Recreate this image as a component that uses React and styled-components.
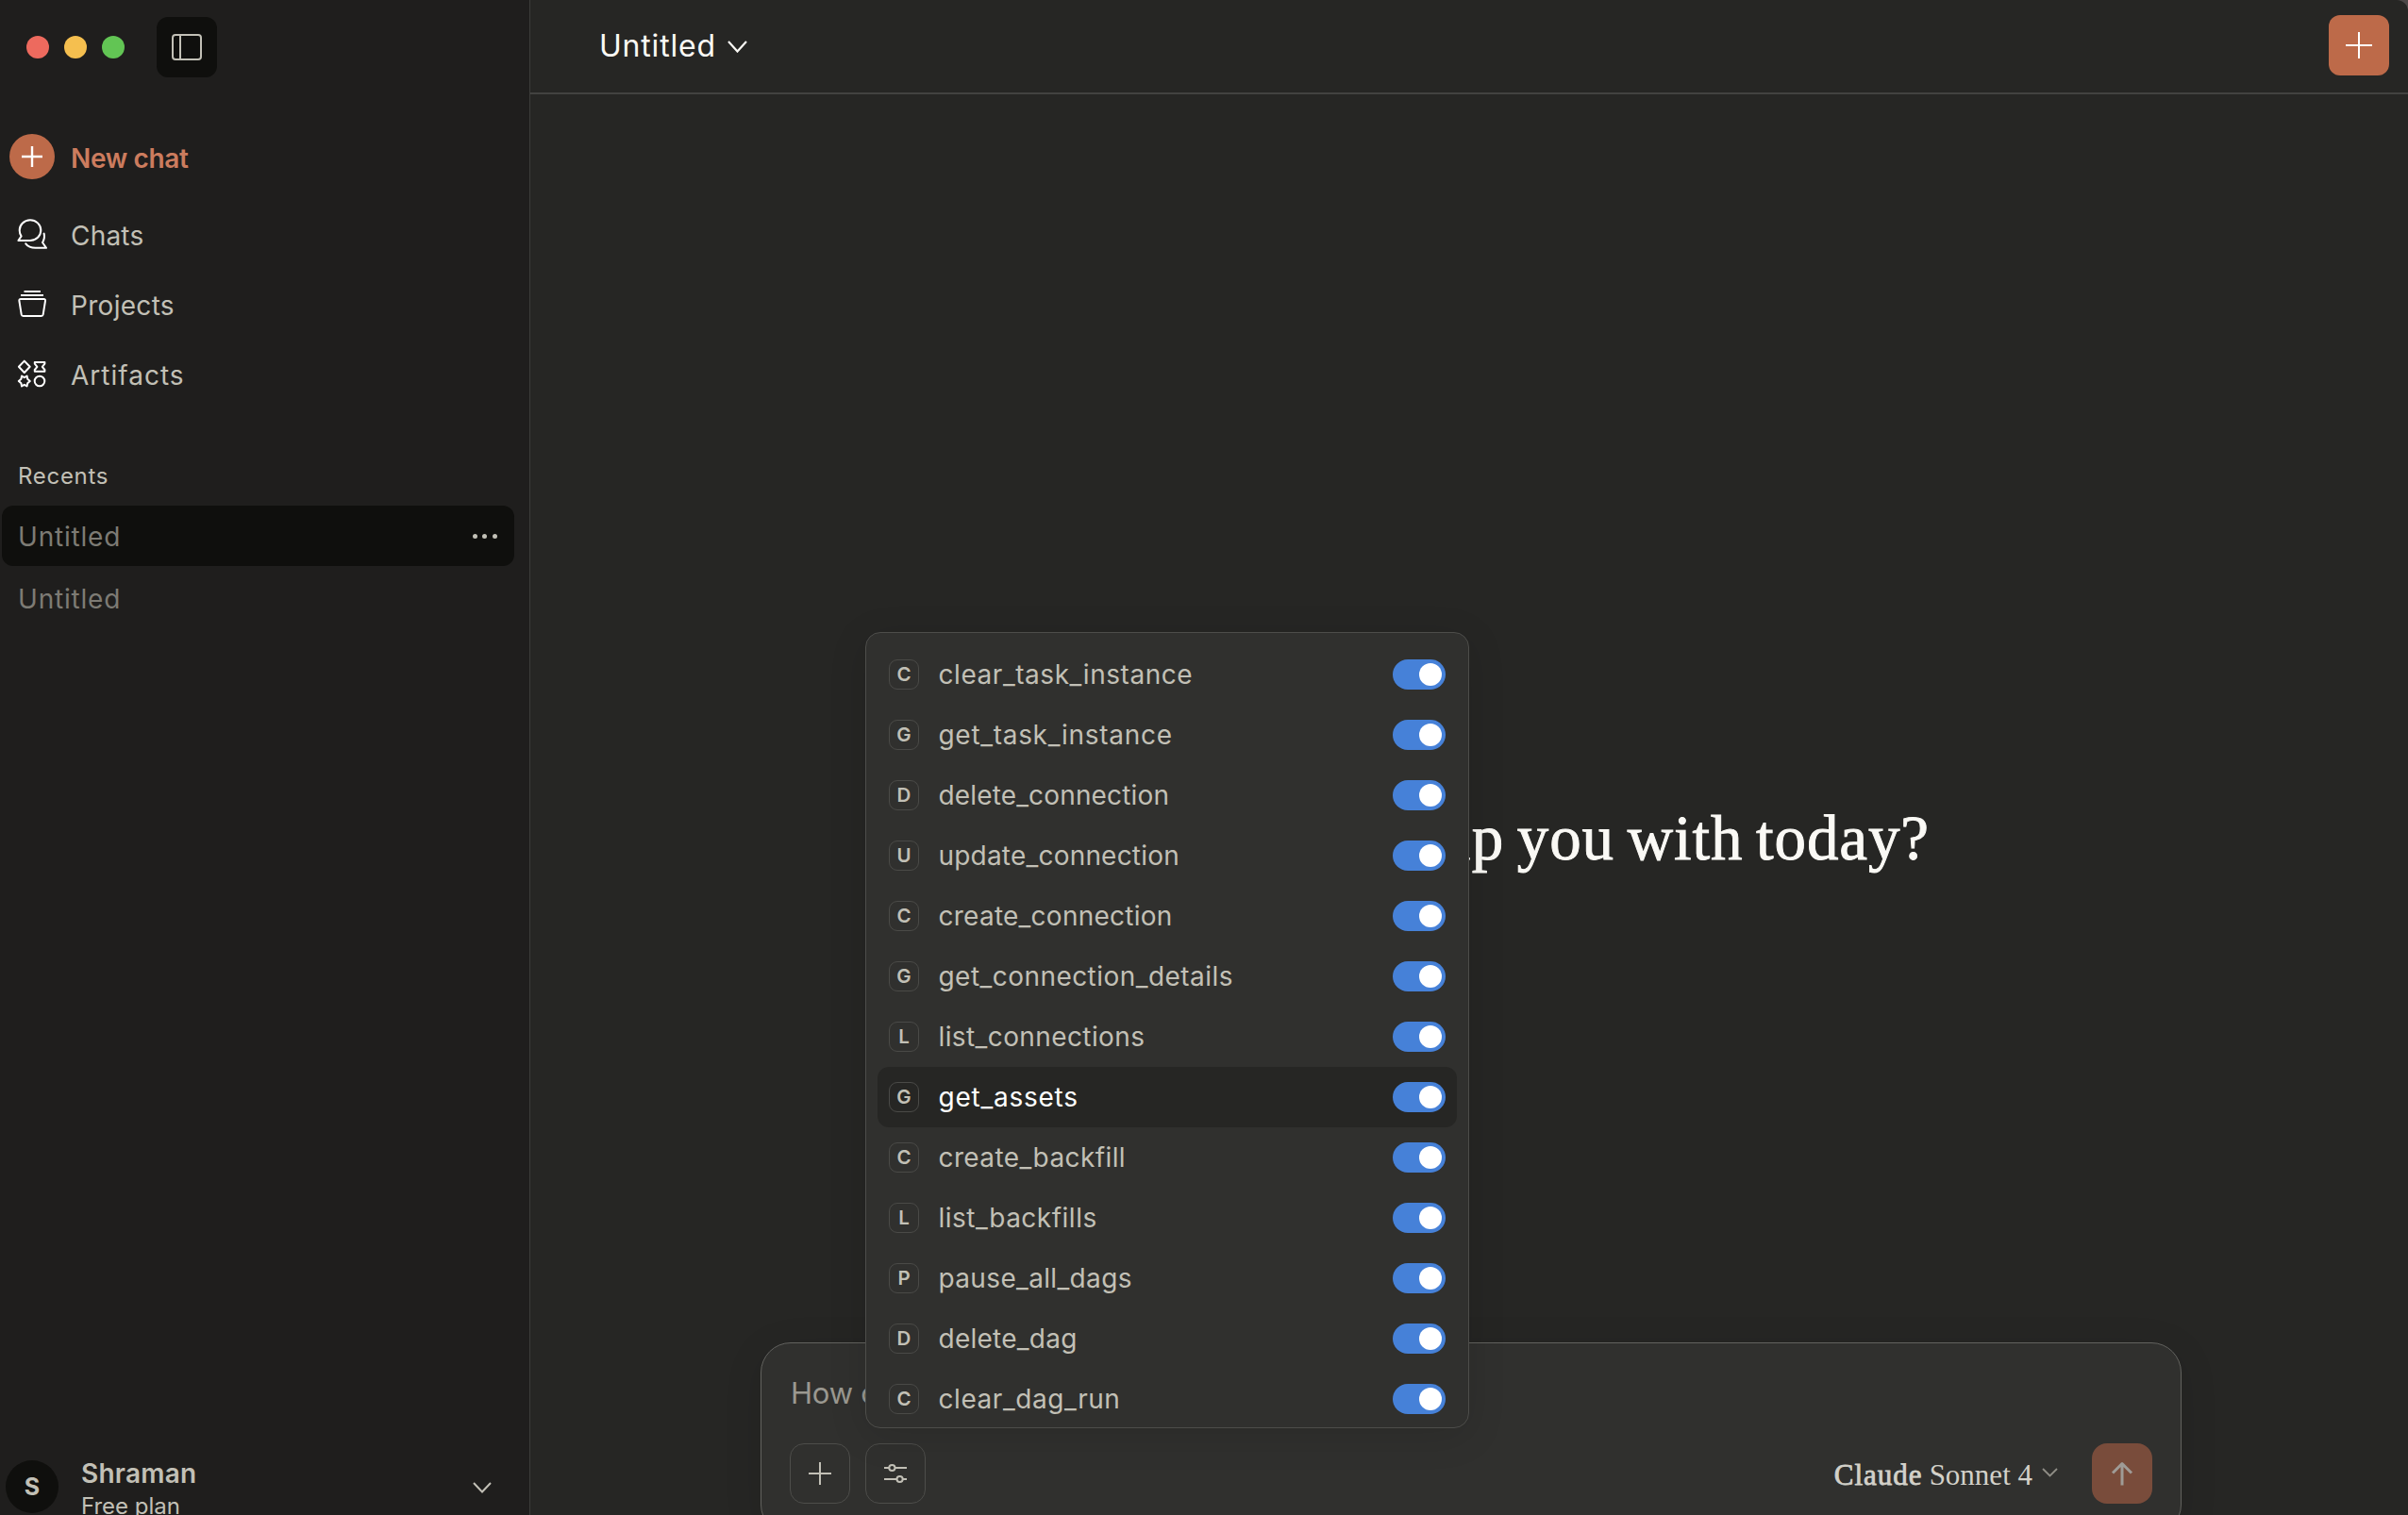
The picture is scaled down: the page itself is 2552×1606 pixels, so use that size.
import React from "react";
import styled, { createGlobalStyle, css } from "styled-components";

const color = {
  sidebar: "#1f1e1d",
  main: "#262624",
  raised: "#30302e",
  sunken: "#0f0f0d",
  text: "#c2c0b6",
  bright: "#faf9f5",
  muted: "#7d7b74",
  accent: "#bd6a49",
  accentText: "#cc7c5e",
  blue: "#4681d8",
  line: "#424240",
};

const Global = createGlobalStyle`
  *, *::before, *::after { box-sizing: border-box; }
  html, body { margin: 0; padding: 0; background: #4c4747; overflow: hidden; }
  button { font: inherit; color: inherit; background: none; border: 0; padding: 0; margin: 0; }
  svg { display: block; flex: none; }
`;

const Window = styled.div`
  display: flex;
  width: 2552px;
  height: 1606px;
  overflow: hidden;
  border-top-right-radius: 12px;
  background: ${color.main};
  color: ${color.text};
  font-family: Inter, "Liberation Sans", sans-serif;
  font-size: 28px;
  line-height: 1;
  white-space: nowrap;
`;

/* ---------- sidebar ---------- */

const Sidebar = styled.aside`
  display: flex;
  flex-direction: column;
  flex: none;
  width: 562px;
  height: 1606px;
  background: ${color.sidebar};
  border-right: 1px solid #3c3c3a;
`;

const TitleBar = styled.div`
  display: flex;
  align-items: center;
  flex: none;
  height: 100px;
  padding-left: 28px;
`;

const Lights = styled.div`
  display: flex;
  gap: 16px;
  margin-right: 34px;
`;

const Light = styled.span`
  width: 24px;
  height: 24px;
  border-radius: 50%;
  background: ${(p) => p.$tone};
`;

const PanelToggle = styled.button`
  display: grid;
  place-items: center;
  width: 64px;
  height: 64px;
  border-radius: 12px;
  background: ${color.sunken};
`;

const Nav = styled.nav`
  display: flex;
  flex-direction: column;
  padding-top: 29px;
`;

const NavItem = styled.a`
  display: flex;
  align-items: center;
  height: 74px;
  padding-left: 10px;
  letter-spacing: ${(p) => p.$track || 0}px;
  ${(p) =>
    p.$primary &&
    css`
      margin-bottom: 8px;
      color: ${color.accentText};
      font-weight: 600;
      letter-spacing: -0.35px;
    `}
`;

const IconSlot = styled.span`
  display: grid;
  place-items: center;
  width: 48px;
  height: 48px;
  margin-right: 17px;
  border-radius: 50%;
  color: #fff;
  background: ${(p) => (p.$filled ? color.accent : "transparent")};
`;

const NavLabel = styled.span`
  padding-top: 3px;
  line-height: 40px;
`;

const SectionTitle = styled.h2`
  margin: 54px 0 13px;
  padding-left: 19px;
  font-size: 24px;
  font-weight: 400;
  line-height: 36px;
  letter-spacing: 0.7px;
`;

const Recent = styled.a`
  display: flex;
  align-items: center;
  justify-content: space-between;
  height: 64px;
  margin: 0 16px 2px 2px;
  padding: 2px 18.5px 0 17px;
  border-radius: 12px;
  color: ${color.muted};
  letter-spacing: 0.8px;
  background: ${(p) => (p.$active ? color.sunken : "transparent")};
`;

const Dots = styled.span`
  display: flex;
  gap: 5.4px;
  padding-bottom: 2px;
`;

const Dot = styled.i`
  width: 5px;
  height: 5px;
  border-radius: 50%;
  background: ${color.text};
`;

const Account = styled.div`
  display: flex;
  align-items: flex-start;
  height: 58px;
  margin-top: auto;
  padding-left: 6px;
`;

const Avatar = styled.div`
  display: grid;
  place-items: center;
  flex: none;
  width: 56px;
  height: 56px;
  padding-top: 1px;
  border-radius: 50%;
  background: ${color.sunken};
  font-size: 25px;
  font-weight: 700;
`;

const AccountText = styled.div`
  display: flex;
  flex-direction: column;
  flex: 1;
  margin-left: 24px;
`;

const AccountName = styled.span`
  line-height: 28px;
  font-weight: 600;
  letter-spacing: 0.25px;
`;

const AccountPlan = styled.span`
  margin-top: 4px;
  font-size: 24px;
  line-height: 34px;
`;

const AccountChevron = styled.span`
  margin: 23px 40px 0 0;
`;

/* ---------- main area ---------- */

const Main = styled.main`
  display: flex;
  flex-direction: column;
  flex: 1;
  min-width: 0;
  height: 1606px;
`;

const Header = styled.header`
  display: flex;
  align-items: center;
  justify-content: space-between;
  flex: none;
  height: 100px;
  padding: 0 20px 2px 73px;
  border-bottom: 2px solid ${color.line};
`;

const ChatTitle = styled.button`
  display: flex;
  align-items: center;
  gap: 12px;
  padding-top: 2px;
  color: ${color.bright};
  font-size: 32px;
  letter-spacing: 0.8px;
`;

const NewButton = styled.button`
  display: grid;
  place-items: center;
  width: 64px;
  height: 64px;
  border-radius: 12px;
  background: ${color.accent};
  color: #fff;
`;

const Hero = styled.section`
  display: flex;
  justify-content: flex-end;
  flex: 1;
  padding: 750px 507px 0 0;
`;

const Greeting = styled.h1`
  margin: 0;
  color: ${color.bright};
  font-family: "Liberation Serif", "Times New Roman", serif;
  font-size: 67px;
  font-weight: 400;
  line-height: 76px;
  letter-spacing: 0.9px;
  word-spacing: -4px;
  -webkit-text-stroke: 0.9px currentColor;
`;

const Composer = styled.section`
  display: flex;
  flex-direction: column;
  flex: none;
  width: 1506px;
  height: 204px;
  margin: 0 0 -21px 244px;
  padding: 35px 30px 0;
  border: 1px solid #62625e;
  border-radius: 32px;
  background: ${color.raised};
  box-shadow: 0 8px 40px rgba(0, 0, 0, 0.1);
`;

const Placeholder = styled.div`
  height: 36px;
  padding-left: 1px;
  color: #9a9890;
  font-size: 31px;
  line-height: 36px;
  letter-spacing: -0.2px;
`;

const Toolbar = styled.div`
  display: flex;
  align-items: center;
  gap: 16px;
  margin-top: 35px;
`;

const ToolButton = styled.button`
  display: grid;
  place-items: center;
  width: 64px;
  height: 64px;
  border: 1px solid #4d4d4a;
  border-radius: 15px;
`;

const MenuAnchor = styled.div`
  position: relative;
`;

const ModelPicker = styled.button`
  display: flex;
  align-items: center;
  margin-left: auto;
  margin-right: 20px;
  padding-top: 2px;
  color: #d3d1c9;
  font-family: "Liberation Serif", "Times New Roman", serif;
  font-size: 31px;
`;

const ModelFamily = styled.span`
  margin-right: 7px;
  letter-spacing: 1px;
  -webkit-text-stroke: 0.8px currentColor;
`;

const ModelChevron = styled.span`
  margin: 0 0 4px 10px;
  color: #8f8d86;
`;

const SendButton = styled.button`
  display: grid;
  place-items: center;
  width: 64px;
  height: 64px;
  border-radius: 16px;
  background: #794c3b;
  color: #9f9b96;
`;

/* ---------- tool menu ---------- */

const Menu = styled.div`
  position: absolute;
  left: 0;
  bottom: 80px;
  width: 640px;
  height: 844px;
  padding: 12px;
  overflow: hidden;
  border: 1px solid #4d4d4a;
  border-radius: 16px;
  background: ${color.raised};
  box-shadow: 0 8px 40px rgba(0, 0, 0, 0.12);
`;

const MenuRow = styled.div`
  display: flex;
  align-items: center;
  height: 64px;
  padding: 0 12px;
  border-radius: 12px;
  color: ${(p) => (p.$active ? "#fff" : color.text)};
  background: ${(p) => (p.$active ? color.main : "transparent")};
`;

const Badge = styled.span`
  display: grid;
  place-items: center;
  width: 32px;
  height: 32px;
  margin-right: 20.5px;
  border: 1px solid #4a4a47;
  border-radius: 9px;
  color: ${color.text};
  font-size: 20.5px;
  font-weight: 600;
`;

const ToolName = styled.span`
  flex: 1;
  line-height: 40px;
  letter-spacing: ${(p) => p.$track}px;
`;

const Switch = styled.span`
  display: flex;
  justify-content: flex-end;
  align-items: center;
  width: 56px;
  height: 32px;
  padding: 4px;
  border-radius: 16px;
  background: ${color.blue};
`;

const Knob = styled.i`
  width: 24px;
  height: 24px;
  border-radius: 50%;
  background: #fff;
`;

/* ---------- icons ---------- */

const Plus = ({ size, weight }) => (
  <svg width={size} height={size} viewBox={`0 0 ${size} ${size}`} stroke="currentColor" strokeWidth={weight}>
    <path d={`M${size / 2} 0V${size}M0 ${size / 2}H${size}`} />
  </svg>
);

const Chevron = ({ width, height, weight = 2 }) => (
  <svg width={width} height={height} viewBox={`0 0 ${width} ${height}`} fill="none" stroke="currentColor" strokeWidth={weight}>
    <path d={`M1 1L${width / 2} ${height - 1.5}L${width - 1} 1`} />
  </svg>
);

const PanelIcon = () => (
  <svg width="32" height="28" viewBox="0 0 32 28" fill="none" stroke={color.text} strokeWidth="2">
    <rect x="1" y="1" width="30" height="26" rx="3" />
    <path d="M9 1V27" />
  </svg>
);

const ChatsIcon = () => (
  <svg width="32" height="32" viewBox="0 0 32 32" fill="none" stroke="currentColor" strokeWidth="2" strokeLinejoin="round" strokeLinecap="round">
    <path d="M14 23H1.4L4.6 18.4C3.3 16.6 2.7 14.6 2.7 12.2A11.3 10.9 0 1 1 14 23Z" />
    <path d="M28.6 15.6C29.4 19 28.9 22.4 27 25L31 30.8H19.6C15 30.8 11.3 29.2 9.3 26.4" />
  </svg>
);

const ProjectsIcon = () => (
  <svg width="32" height="32" viewBox="0 0 32 32" fill="none" stroke="currentColor" strokeWidth="2" strokeLinejoin="round">
    <path d="M7.5 3H25M4 7H28" />
    <path d="M4 11H28.4Q30.4 11 30 13L27.7 27.4Q27.4 29 25.8 29H6.6Q5 29 4.7 27.4L2.4 13Q2 11 4 11Z" />
  </svg>
);

const ArtifactsIcon = () => (
  <svg width="32" height="32" viewBox="0 0 32 32" fill="none" stroke="currentColor" strokeWidth="2" strokeLinejoin="round">
    <path d="M7.8 2.6L13.7 8.8L7.8 15L1.9 8.8Z" />
    <path d="M18.8 4H29.4V5.6L26.8 8.8L29.4 12V13.8H18.8V12L21.4 8.8L18.8 5.6Z" />
    <path d="M5 18.6L7.8 20.2L10.6 18.6L11.2 21.8L13.8 24L11.2 26.2L10.6 29.4L7.8 27.8L5 29.4L4.4 26.2L1.8 24L4.4 21.8Z" />
    <circle cx="24" cy="24" r="5.3" />
  </svg>
);

const SlidersIcon = () => (
  <svg width="24" height="22" viewBox="0 0 24 22" fill="none" stroke="currentColor" strokeWidth="2">
    <circle cx="8.4" cy="5" r="3.1" />
    <circle cx="16.6" cy="17" r="3.1" />
    <path d="M0 5H5.3M11.5 5H24M0 17H13.5M19.7 17H24" />
  </svg>
);

const ArrowUp = () => (
  <svg width="24" height="26" viewBox="0 0 24 26" fill="none" stroke="currentColor" strokeWidth="3" strokeLinejoin="round">
    <path d="M12 25.5V2.5M2 12.5L12 2.5L22 12.5" />
  </svg>
);

/* ---------- data ---------- */

const navItems = [
  { label: "Chats", Icon: ChatsIcon, track: 0.2 },
  { label: "Projects", Icon: ProjectsIcon, track: 0.3 },
  { label: "Artifacts", Icon: ArtifactsIcon, track: 1 },
];

const tools = [
  { name: "clear_task_instance", track: 0.55 },
  { name: "get_task_instance", track: 0.7 },
  { name: "delete_connection", track: 0.15 },
  { name: "update_connection", track: 0.2 },
  { name: "create_connection", track: 0.25 },
  { name: "get_connection_details", track: 0.45 },
  { name: "list_connections", track: 0.4 },
  { name: "get_assets", track: 0.75 },
  { name: "create_backfill", track: 0.4 },
  { name: "list_backfills", track: 0.5 },
  { name: "pause_all_dags", track: 0.35 },
  { name: "delete_dag", track: 0.25 },
  { name: "clear_dag_run", track: 0.55 },
];

function ToolMenu({ selected }) {
  return (
    <Menu>
      {tools.map(({ name, track }) => (
        <MenuRow key={name} $active={name === selected}>
          <Badge>{name[0].toUpperCase()}</Badge>
          <ToolName $track={track}>{name}</ToolName>
          <Switch>
            <Knob />
          </Switch>
        </MenuRow>
      ))}
    </Menu>
  );
}

export default function App() {
  return (
    <Window>
      <Global />
      <Sidebar>
        <TitleBar>
          <Lights>
            <Light $tone="#ed6a5e" />
            <Light $tone="#f5bf4f" />
            <Light $tone="#62c554" />
          </Lights>
          <PanelToggle>
            <PanelIcon />
          </PanelToggle>
        </TitleBar>
        <Nav>
          <NavItem $primary>
            <IconSlot $filled>
              <Plus size={22} weight={2.4} />
            </IconSlot>
            <NavLabel>New chat</NavLabel>
          </NavItem>
          {navItems.map(({ label, Icon, track }) => (
            <NavItem key={label} $track={track}>
              <IconSlot>
                <Icon />
              </IconSlot>
              <NavLabel>{label}</NavLabel>
            </NavItem>
          ))}
        </Nav>
        <SectionTitle>Recents</SectionTitle>
        <Recent $active>
          Untitled
          <Dots>
            <Dot />
            <Dot />
            <Dot />
          </Dots>
        </Recent>
        <Recent>Untitled</Recent>
        <Account>
          <Avatar>S</Avatar>
          <AccountText>
            <AccountName>Shraman</AccountName>
            <AccountPlan>Free plan</AccountPlan>
          </AccountText>
          <AccountChevron>
            <Chevron width={20} height={12} />
          </AccountChevron>
        </Account>
      </Sidebar>
      <Main>
        <Header>
          <ChatTitle>
            Untitled
            <Chevron width={21} height={13} weight={2.2} />
          </ChatTitle>
          <NewButton>
            <Plus size={28} weight={2} />
          </NewButton>
        </Header>
        <Hero>
          <Greeting>How can I help you with today?</Greeting>
        </Hero>
        <Composer>
          <Placeholder>How can I help you today?</Placeholder>
          <Toolbar>
            <ToolButton>
              <Plus size={24} weight={2} />
            </ToolButton>
            <MenuAnchor>
              <ToolButton>
                <SlidersIcon />
              </ToolButton>
              <ToolMenu selected="get_assets" />
            </MenuAnchor>
            <ModelPicker>
              <ModelFamily>Claude</ModelFamily>
              Sonnet 4
              <ModelChevron>
                <Chevron width={17} height={10} weight={1.8} />
              </ModelChevron>
            </ModelPicker>
            <SendButton>
              <ArrowUp />
            </SendButton>
          </Toolbar>
        </Composer>
      </Main>
    </Window>
  );
}
